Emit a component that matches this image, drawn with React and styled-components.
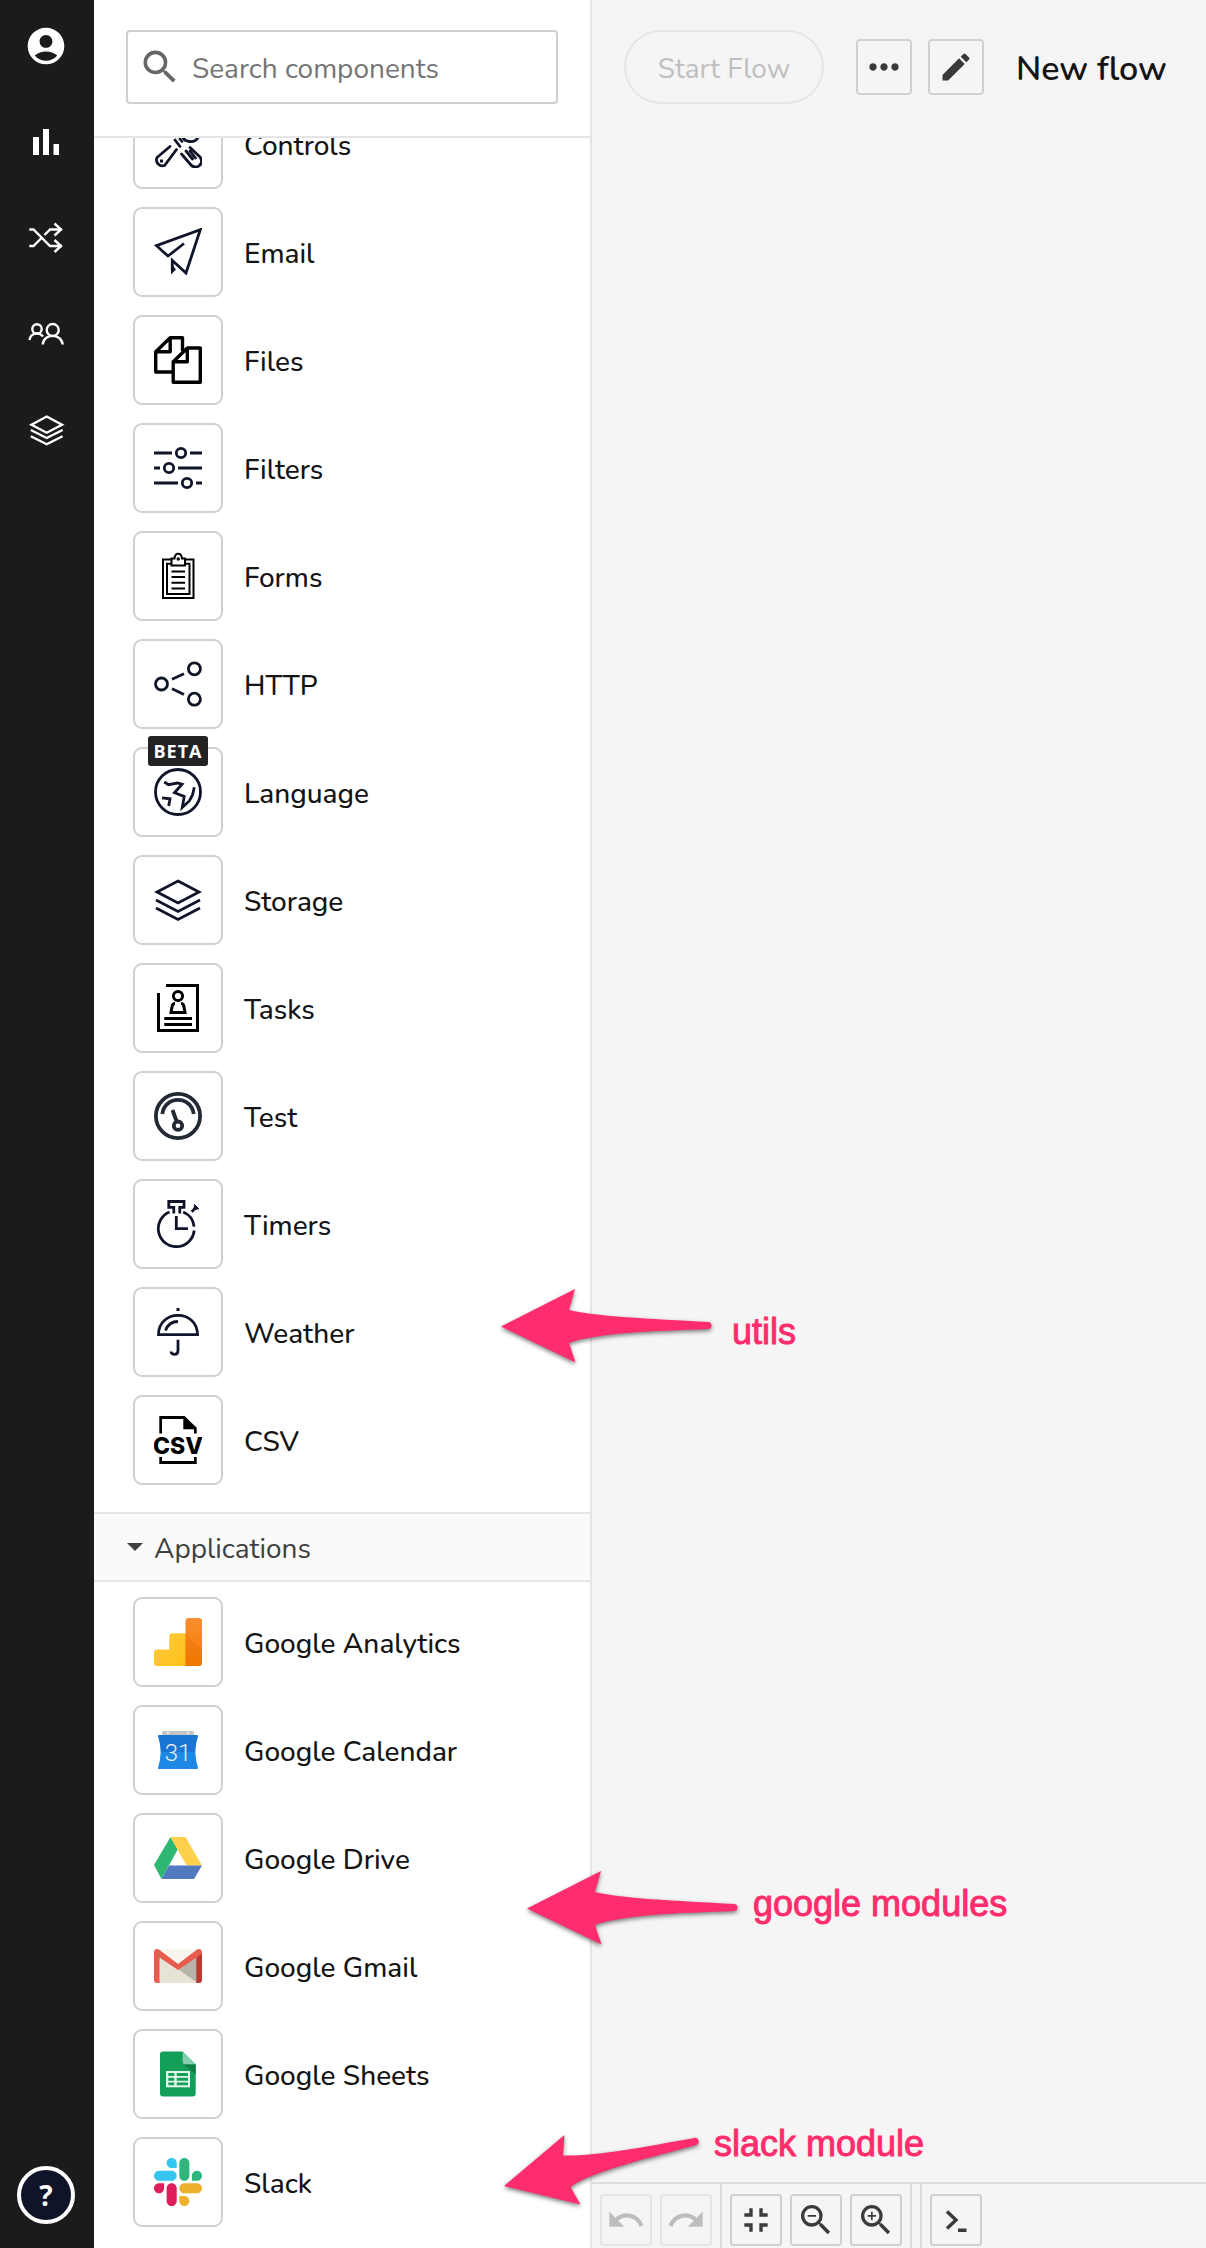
import React, { useState } from 'react';
import styled, { createGlobalStyle, ThemeProvider } from 'styled-components';
import {
  MdAccountCircle,
  MdEdit,
  MdFullscreenExit,
  MdMoreHoriz,
  MdRedo,
  MdSearch,
  MdUndo,
  MdZoomIn,
  MdZoomOut,
} from 'react-icons/md';

const theme = {
  colors: {
    sidebar: '#1b1b1b',
    canvas: '#f5f5f5',
    panel: '#ffffff',
    section: '#fafafa',
    line: '#e5e5e5',
    border: '#d0d0d0',
    text: '#141414',
    muted: '#757575',
    icon: '#3a3a3a',
    ink: '#0f1428',
    pink: '#ff2d6d',
  },
  fonts: {
    primary: '"Nunito", "Lato", "Open Sans", sans-serif',
    note: '"Liberation Sans", Arial, sans-serif',
  },
};

const GlobalStyle = createGlobalStyle`
  *, *::before, *::after {
    box-sizing: border-box;
  }
  body {
    margin: 0;
    font-family: ${theme.fonts.primary};
    color: ${theme.colors.text};
    background: ${theme.colors.canvas};
  }
  button, input {
    font-family: inherit;
  }
`;

const Layout = styled.div`
  position: relative;
  display: grid;
  grid-template-columns: 94px 498px 1fr;
  height: 100vh;
  overflow: hidden;
`;

const Sidebar = styled.nav`
  display: flex;
  flex-direction: column;
  justify-content: space-between;
  align-items: center;
  padding: 24px 2px 24px 0;
  background: ${props => props.theme.colors.sidebar};
`;

const NavList = styled.ul`
  display: flex;
  flex-direction: column;
  gap: 52px;
  margin: 0;
  padding: 0;
  list-style: none;
`;

const NavLink = styled.a`
  display: block;
  width: 44px;
  height: 44px;
  color: #fff;

  svg {
    display: block;
  }
`;

const HelpButton = styled.button`
  width: 58px;
  height: 58px;
  padding: 0;
  border: 4px solid #fff;
  border-radius: 50%;
  color: #fff;
  background: ${props => props.theme.colors.ink};
  font: 700 28px 'Open Sans', sans-serif;
`;

const Panel = styled.aside`
  display: flex;
  flex-direction: column;
  min-height: 0;
  background: ${props => props.theme.colors.panel};
  border-right: 2px solid ${props => props.theme.colors.line};
`;

const SearchBar = styled.div`
  flex: none;
  padding: 30px 32px 32px;
  border-bottom: 2px solid ${props => props.theme.colors.line};
`;

const SearchBox = styled.label`
  display: flex;
  align-items: center;
  gap: 10px;
  height: 74px;
  padding: 0 10px;
  color: #666;
  border: 2px solid ${props => props.theme.colors.border};
  border-radius: 4px;
`;

const SearchInput = styled.input`
  flex: 1;
  min-width: 0;
  padding: 4px 0 0;
  border: 0;
  outline: 0;
  background: none;
  font-size: 28px;
  color: ${props => props.theme.colors.text};

  &::placeholder {
    color: ${props => props.theme.colors.muted};
    opacity: 1;
  }
`;

const Scroller = styled.div`
  flex: 1;
  min-height: 0;
  overflow: hidden;
`;

const ComponentList = styled.ul`
  margin: ${props => (props.$scrolled ? '-54px 0 0' : 0)};
  padding: 6px 39px 18px;
  list-style: none;
`;

const ComponentRow = styled.li`
  display: flex;
  align-items: center;
  gap: 21px;
  padding: 9px 0;
`;

const ComponentName = styled.span`
  padding-top: 4px;
  font-size: 28px;
  font-weight: 500;
`;

const Tile = styled.span`
  position: relative;
  display: flex;
  align-items: center;
  justify-content: center;
  flex: none;
  width: 90px;
  height: 90px;
  border: 2px solid ${props => props.theme.colors.border};
  border-radius: 9px;
`;

const Badge = styled.span`
  position: absolute;
  top: -13px;
  left: 13px;
  width: 60px;
  border-radius: 3px;
  background: #222;
  color: #fff;
  font: 700 18px/30px 'Open Sans', sans-serif;
  letter-spacing: 1px;
  text-align: center;
`;

const SectionToggle = styled.button`
  display: flex;
  align-items: center;
  gap: 11px;
  width: 100%;
  height: 70px;
  padding: 0 33px;
  border: solid ${props => props.theme.colors.line};
  border-width: 2px 0;
  background: ${props => props.theme.colors.section};
  color: #3f3f3f;
  font-size: 28px;
`;

const SectionName = styled.span`
  padding-top: 4px;
`;

const Main = styled.main`
  display: flex;
  flex-direction: column;
  justify-content: space-between;
  min-width: 0;
`;

const FlowHeader = styled.header`
  display: flex;
  align-items: center;
  gap: 16px;
  padding: 30px 32px;
`;

const StartButton = styled.button`
  width: 200px;
  height: 74px;
  margin-right: 16px;
  padding: 4px 0 0;
  border: 2px solid ${props => props.theme.colors.line};
  border-radius: 37px;
  background: none;
  color: #bfbfbf;
  font-size: 28px;
`;

const IconButton = styled.button`
  display: flex;
  align-items: center;
  justify-content: center;
  flex: none;
  width: ${props => props.$size}px;
  height: ${props => props.$size}px;
  padding: 0;
  border: 2px solid ${props => props.theme.colors.border};
  border-radius: 4px;
  background: none;
  color: ${props => props.theme.colors.icon};

  &:disabled {
    border-color: ${props => props.theme.colors.line};
    color: #bdbdbd;
  }
  svg {
    flex: none;
  }
`;

const FlowTitle = styled.h1`
  margin: 0 0 0 16px;
  padding-top: 4px;
  font-size: 34px;
  font-weight: 600;
  line-height: 44px;
  white-space: nowrap;
`;

const Toolbar = styled.footer`
  display: flex;
  border-top: 2px solid #dcdcdc;
`;

const ToolGroup = styled.div`
  display: flex;
  gap: 8px;
  padding: ${props => (props.$empty ? '0 4px' : '10px 8px 2px')};
  border-right: ${props => (props.$last ? 0 : '2px solid #dcdcdc')};
`;

const Notes = styled.div`
  position: absolute;
  inset: 0;
  pointer-events: none;
`;

const Arrow = styled.svg`
  position: absolute;
  left: ${props => props.$x}px;
  top: ${props => props.$y}px;
  overflow: visible;
  fill: ${props => props.theme.colors.pink};
  filter: drop-shadow(0 2px 2px rgba(0, 0, 0, 0.5));
`;

const NoteText = styled.span`
  position: absolute;
  left: ${props => props.$x}px;
  top: ${props => props.$y}px;
  color: ${props => props.theme.colors.pink};
  font: 36px/40px ${props => props.theme.fonts.note};
  -webkit-text-stroke: 1px ${props => props.theme.colors.pink};
  white-space: nowrap;
`;

const NavGlyph = ({ children }) => (
  <svg width="44" height="44" viewBox="0 0 44 44" fill="none" stroke="currentColor" strokeWidth="2.4">
    {children}
  </svg>
);

const Glyph = ({ children, color = '#0f1428', width = 2.8, filled }) => (
  <svg
    width="48"
    height="48"
    viewBox="0 0 48 48"
    fill={filled ? color : 'none'}
    stroke={filled ? 'none' : color}
    strokeWidth={width}
  >
    {children}
  </svg>
);

const BarsIcon = () => (
  <NavGlyph>
    <path d="M9 17h6v18H9zM19 9h6v26h-6zM29.5 24H35v11h-5.5z" fill="currentColor" stroke="none" />
  </NavGlyph>
);

const ShuffleIcon = () => (
  <NavGlyph>
    <path d="M5.3 13.5H9.5L26 30H38M5.3 30H9.5L17 22.5M20.5 19L26 13.5H38" />
    <path d="M30.5 7.5L37 13.5L30.5 19.5M30.5 24L37 30L30.5 36" />
  </NavGlyph>
);

const PeopleIcon = () => (
  <NavGlyph>
    <circle cx="28.7" cy="18" r="6" />
    <circle cx="13" cy="17" r="4.7" />
    <path d="M18.7 32.5C19.5 21 37.5 21 38.7 32.5M5.5 28C6.5 20.5 15 19.5 19 24.5" />
  </NavGlyph>
);

const NavLayersIcon = () => (
  <NavGlyph>
    <path d="M22.7 8.5L38 16.7L22.7 24.7L7.5 16.7ZM6.8 22L22.7 30L38.6 22M6.8 28.2L22.7 36.2L38.6 28.2" />
  </NavGlyph>
);

const ControlsIcon = () => (
  <Glyph>
    <g strokeLinecap="round">
      <path d="M16 26.5L3 37.5A6 6 0 0 0 10.5 45.5L22.5 29.5M21 20L26 26.500M26 19L28 21.500" />
      <path d="M27.500 34L37 45A6 6 0 0 0 46 37L36 27.500M32 31L38.500 39M36 31L41.500 38" />
      <path d="M28 14C29 23.500 41 23.500 44.500 17" />
    </g>
    <path d="M6 39.500h3v3H6z" fill="#0f1428" stroke="none" />
  </Glyph>
);

const EmailIcon = () => (
  <Glyph>
    <path d="M30 15.5L14 28L2.5 17.7L46.3 1.7L32 45L18.3 32.5V43" />
    <path d="M17 38V46.5L22 41.5L19 38Z" fill="#0f1428" stroke="none" />
  </Glyph>
);

const FilesIcon = () => (
  <Glyph color="#000" width={3.4}>
    <g strokeLinejoin="round">
      <path d="M28.5 15V1.7H16.2V15.7H1.7V36H18.5M1.7 15.7L16.2 1.7" />
      <path d="M33.3 12H46.3V46.3H19.2V25.7L33.3 12V25.7H19.2" />
    </g>
  </Glyph>
);

const FiltersIcon = () => (
  <Glyph>
    <path d="M0 9H18M36 9H48M0 24H6M24 24H48M0 39H24M42 39H48" />
    <circle cx="27" cy="9" r="4.7" />
    <circle cx="15" cy="24" r="4.7" />
    <circle cx="33" cy="39" r="4.7" />
  </Glyph>
);

const FormsIcon = () => (
  <Glyph color="#000" width={2}>
    <path d="M17 7.5H9V46H39.5V7.5H31.5M17 11.7H13V42H35.5V11.7H31.5" />
    <path d="M17.5 13.5V6.5H20.5C21 0 27.5 0 28 6.5H31V13.5ZM17.5 19.5H31M17.5 25H31M17.5 30.7H31M17.5 36.5H31" />
    <circle cx="24.2" cy="7" r="0.7" />
  </Glyph>
);

const HttpIcon = () => (
  <Glyph>
    <circle cx="7.5" cy="24" r="6" />
    <circle cx="40.4" cy="8.8" r="6" />
    <circle cx="40.4" cy="39.2" r="6" />
    <path d="M18 19.3L30 13.7M18 28.7L30 34.5" />
  </Glyph>
);

const LanguageIcon = () => (
  <Glyph>
    <circle cx="24" cy="24" r="22.5" />
    <path d="M10.3 14L14.5 16.7L23.5 15L28 16.3L20.5 24.7L30.2 28.5L28.3 39.5L35.3 33L38.5 27L40.3 19.3M8 29.8L16 30.8L14.7 38" />
  </Glyph>
);

const StorageIcon = () => (
  <Glyph>
    <path d="M24 5L45 16L24 27L3 16ZM2 24L24 35.5L46 24M2 32L24 43.5L46 32" />
  </Glyph>
);

const TasksIcon = () => (
  <Glyph color="#000" width={3}>
    <path d="M12 1.5H43.5V46.5H4.5V9M10.3 34.5H38M10.3 40.5H38" />
    <circle cx="24" cy="12" r="4.6" />
    <path d="M21 19.5C19 19.5 18.5 20.5 18.2 22L17 28.5H31L29.8 22C29.5 20.5 29 19.5 27 19.5" />
  </Glyph>
);

const TestIcon = () => (
  <Glyph color="#232a36" width={3.8}>
    <circle cx="24" cy="24" r="22.1" />
    <path d="M8.3 22C10.5 3.2 37.5 3.2 39.7 22M18.5 18L22.5 29" />
    <circle cx="24" cy="33.7" r="4.2" />
  </Glyph>
);

const TimersIcon = () => (
  <Glyph>
    <path d="M15.5 12A18 18 0 1 0 40.2 30.5M29.2 12A18 18 0 0 1 40.1 26.7M22.3 16V28.7H34" />
    <path d="M19.8 13.5V7.3H14.8V1.5H30V7.3H25.8V13.5M37.7 11.7L42 7.5" />
    <path d="M40.5 4.5L44.8 8.8L40 9.5Z" fill="#0f1428" strokeWidth="1" />
  </Glyph>
);

const WeatherIcon = () => (
  <Glyph>
    <path d="M4.5 26.6C4.5 1 43.5 1 43.5 26.6ZM11.5 22.5C13.5 17 18 13.5 24 13.5M24 31.7V42.5C24 48 17 47 17 43.5" />
    <path d="M22.5 0h3v3h-3z" fill="#0f1428" stroke="none" />
  </Glyph>
);

const CsvIcon = () => (
  <Glyph color="#000" filled>
    <path d="M5.3 0H30.5L42.7 11.8V17.5H40V13.3H29.3V3H8V17.5H5.3ZM5.3 41H8V45H40V41H42.7V48H5.3Z" />
    <text x="24" y="37.5" textAnchor="middle" fontFamily="Inter, sans-serif" fontWeight="800" fontSize="23">
      CSV
    </text>
  </Glyph>
);

const AnalyticsIcon = () => (
  <Glyph filled>
    <defs>
      <linearGradient id="bar" x1="0" y1="0" x2="0" y2="1">
        <stop offset="0" stopColor="#f98d2f" />
        <stop offset="1" stopColor="#f57c00" />
      </linearGradient>
      <linearGradient id="steps" x1="0" y1="0" x2="1" y2="1">
        <stop offset="0" stopColor="#ffcb3d" />
        <stop offset="1" stopColor="#ffc019" />
      </linearGradient>
    </defs>
    <path d="M32 15.3H18.5A3.2 3.2 0 0 0 15.3 18.5V31.5H3.2A3.2 3.2 0 0 0 0 34.7V44.8A3.2 3.2 0 0 0 3.2 48H32Z" fill="url(#steps)" />
    <path d="M31.5 3.2A3.2 3.2 0 0 1 34.7 0H44.8A3.2 3.2 0 0 1 48 3.2V44.8A3.2 3.2 0 0 1 44.8 48H31.5Z" fill="url(#bar)" />
    <path d="M31.5 16L48 31.5V44.8A3.2 3.2 0 0 1 44.8 48H31.5Z" fill="#e8710a" opacity="0.35" />
  </Glyph>
);

const CalendarIcon = () => (
  <Glyph filled>
    <path d="M8 9V6.5A1.5 1.5 0 0 1 9.5 5H38.5A1.5 1.5 0 0 1 40 6.5V9Z" fill="#c4c4c4" />
    <circle cx="14" cy="7" r="1" fill="#fff" />
    <circle cx="34" cy="7" r="1" fill="#fff" />
    <path d="M5 9H43A1 1 0 0 1 44 10Q41.5 18 41.3 26H6.7Q6.5 18 4 10A1 1 0 0 1 5 9Z" fill="#1976d2" />
    <path d="M6.7 26H41.3Q41.5 34 44 42A1 1 0 0 1 43 43H5A1 1 0 0 1 4 42Q6.5 34 6.7 26Z" fill="#1e88e5" />
    <text x="24" y="34.7" textAnchor="middle" fill="#eee" fontFamily="Roboto, sans-serif" fontWeight="300" fontSize="24">
      31
    </text>
  </Glyph>
);

const DriveIcon = () => (
  <Glyph filled>
    <path d="M16.5 3L23.7 15.5L7.5 45L0 31Z" fill="#2eb673" />
    <path d="M16.5 3H31.5L48 31.5H32.5Z" fill="#ffd04b" />
    <path d="M15 31.5H48L40 45H7.5Z" fill="#5079bf" />
  </Glyph>
);

const GmailIcon = () => (
  <Glyph filled>
    <path d="M3 7H45V41H3Z" fill="#e8e3d7" />
    <path d="M3 7H45L24 23Z" fill="#f8f6ef" />
    <path d="M24 27L43 13V41Z" fill="#b7b5aa" />
    <path d="M24 27L43 41H5.5Z" fill="#e8e3d7" />
    <path d="M5.5 15V41H3A3 3 0 0 1 0 38V10Z" fill="#ea5b4f" />
    <path d="M42.3 15V41H45A3 3 0 0 0 48 38V10Z" fill="#b93b31" />
    <path d="M0 10C0 7 3 6.2 5 7.5L24 22L43 7.5C45 6.2 48 7 48 10C48 12 47 12.5 45.5 13.5L24 28L5.5 15.5V17L0 13Z" fill="#ea5b4f" />
  </Glyph>
);

const SheetsIcon = () => (
  <Glyph filled>
    <path d="M9 1.5H28.7L41.7 14.5V43.5A3 3 0 0 1 38.7 46.5H9A3 3 0 0 1 6 43.5V4.5A3 3 0 0 1 9 1.5Z" fill="#149f58" />
    <path d="M28.7 1.5L41.7 14.5H31.7A3 3 0 0 1 28.7 11.5Z" fill="#87ceac" />
    <path d="M29.7 14.5H41.7V24Z" fill="#0d7f45" />
    <path d="M12 21H36V37.3H12Z" fill="#e6f5ec" />
    <path d="M14.3 23H20.3V26H14.3ZM22.7 23H34V26H22.7ZM14.3 27.8H20.3V30.7H14.3ZM22.7 27.8H34V30.7H22.7ZM14.3 32.4H20.3V35.3H14.3ZM22.7 32.4H34V35.3H22.7Z" fill="#149f58" />
  </Glyph>
);

const SlackIcon = () => (
  <svg width="48" height="48" viewBox="0 0 122.8 122.8">
    <path fill="#e01e5a" d="M25.8 77.6c0 7.1-5.8 12.9-12.9 12.9S0 84.7 0 77.6s5.8-12.9 12.9-12.9h12.9v12.9zm6.5 0c0-7.1 5.8-12.9 12.9-12.9s12.9 5.8 12.9 12.9v32.3c0 7.1-5.8 12.9-12.9 12.9s-12.9-5.8-12.9-12.9V77.6z" />
    <path fill="#36c5f0" d="M45.2 25.8c-7.1 0-12.9-5.8-12.9-12.9S38.1 0 45.2 0s12.9 5.8 12.9 12.9v12.9H45.2zm0 6.5c7.1 0 12.9 5.8 12.9 12.9s-5.8 12.9-12.9 12.9H12.9C5.8 58.1 0 52.3 0 45.2s5.8-12.9 12.9-12.9h32.3z" />
    <path fill="#2eb67d" d="M97 45.2c0-7.1 5.8-12.9 12.9-12.9s12.9 5.8 12.9 12.9-5.8 12.9-12.9 12.9H97V45.2zm-6.5 0c0 7.1-5.8 12.9-12.9 12.9s-12.9-5.8-12.9-12.9V12.9C64.7 5.8 70.5 0 77.6 0s12.9 5.8 12.9 12.9v32.3z" />
    <path fill="#ecb22e" d="M77.6 97c7.1 0 12.9 5.8 12.9 12.9s-5.8 12.9-12.9 12.9-12.9-5.8-12.9-12.9V97h12.9zm0-6.5c-7.1 0-12.9-5.8-12.9-12.9s5.8-12.9 12.9-12.9h32.3c7.1 0 12.9 5.8 12.9 12.9s-5.8 12.9-12.9 12.9H77.6z" />
  </svg>
);

const ConsoleIcon = () => (
  <svg width="40" height="40" viewBox="0 0 40 40" fill="none" stroke="currentColor" strokeWidth="3.4">
    <path d="M11 11.5L20 20L11 28.5M22 30.2H30.5" />
  </svg>
);

const navItems = [
  { label: 'Account', icon: <MdAccountCircle size={44} /> },
  { label: 'Dashboard', icon: <BarsIcon /> },
  { label: 'Flows', icon: <ShuffleIcon /> },
  { label: 'Teams', icon: <PeopleIcon /> },
  { label: 'Storages', icon: <NavLayersIcon /> },
];

const utils = [
  { title: 'Controls', icon: <ControlsIcon /> },
  { title: 'Email', icon: <EmailIcon /> },
  { title: 'Files', icon: <FilesIcon /> },
  { title: 'Filters', icon: <FiltersIcon /> },
  { title: 'Forms', icon: <FormsIcon /> },
  { title: 'HTTP', icon: <HttpIcon /> },
  { title: 'Language', icon: <LanguageIcon />, beta: true },
  { title: 'Storage', icon: <StorageIcon /> },
  { title: 'Tasks', icon: <TasksIcon /> },
  { title: 'Test', icon: <TestIcon /> },
  { title: 'Timers', icon: <TimersIcon /> },
  { title: 'Weather', icon: <WeatherIcon /> },
  { title: 'CSV', icon: <CsvIcon /> },
];

const applications = [
  { title: 'Google Analytics', icon: <AnalyticsIcon /> },
  { title: 'Google Calendar', icon: <CalendarIcon /> },
  { title: 'Google Drive', icon: <DriveIcon /> },
  { title: 'Google Gmail', icon: <GmailIcon /> },
  { title: 'Google Sheets', icon: <SheetsIcon /> },
  { title: 'Slack', icon: <SlackIcon /> },
];

const straightArrow =
  'M0 37.5L74 0L68 21C90 27 150 30 207 33A3.5 3.5 0 0 1 207 40C150 42 95 44 68 54L74.5 73.5Z';
const tiltedArrow =
  'M0 51L60.5 0L59 20.5C95 21 140 12 190 3A3.5 3.5 0 0 1 192 10C150 22 90 35 66.5 52L76.5 69.5Z';

function Components({ items, scrolled }) {
  return (
    <ComponentList $scrolled={scrolled}>
      {items.map(({ title, icon, beta }) => (
        <ComponentRow key={title}>
          <Tile>
            {icon}
            {beta ? <Badge>BETA</Badge> : null}
          </Tile>
          <ComponentName>{title}</ComponentName>
        </ComponentRow>
      ))}
    </ComponentList>
  );
}

function App() {
  const [query, setQuery] = useState('');
  const [isOpen, setIsOpen] = useState(true);

  return (
    <ThemeProvider theme={theme}>
      <GlobalStyle />
      <Layout>
        <Sidebar>
          <NavList>
            {navItems.map(({ label, icon }) => (
              <li key={label}>
                <NavLink href="#" aria-label={label}>
                  {icon}
                </NavLink>
              </li>
            ))}
          </NavList>
          <HelpButton aria-label="Help">?</HelpButton>
        </Sidebar>

        <Panel>
          <SearchBar>
            <SearchBox>
              <MdSearch size={44} />
              <SearchInput
                aria-label="Search components"
                placeholder="Search components"
                value={query}
                onChange={e => setQuery(e.target.value)}
              />
            </SearchBox>
          </SearchBar>
          <Scroller>
            <Components items={utils} scrolled />
            <SectionToggle aria-expanded={isOpen} onClick={() => setIsOpen(!isOpen)}>
              <svg width="16" height="8" viewBox="0 0 16 8" fill="currentColor">
                <path d="M0 0H16L8 8Z" />
              </svg>
              <SectionName>Applications</SectionName>
            </SectionToggle>
            {isOpen ? <Components items={applications} /> : null}
          </Scroller>
        </Panel>

        <Main>
          <FlowHeader>
            <StartButton disabled>Start Flow</StartButton>
            <IconButton $size={56} aria-label="More">
              <MdMoreHoriz size={44} />
            </IconButton>
            <IconButton $size={56} aria-label="Rename">
              <MdEdit size={36} />
            </IconButton>
            <FlowTitle>New flow</FlowTitle>
          </FlowHeader>
          <Toolbar>
            <ToolGroup>
              <IconButton $size={52} aria-label="Undo" disabled>
                <MdUndo size={40} />
              </IconButton>
              <IconButton $size={52} aria-label="Redo" disabled>
                <MdRedo size={40} />
              </IconButton>
            </ToolGroup>
            <ToolGroup>
              <IconButton $size={52} aria-label="Fit to screen">
                <MdFullscreenExit size={40} />
              </IconButton>
              <IconButton $size={52} aria-label="Zoom out">
                <MdZoomOut size={40} />
              </IconButton>
              <IconButton $size={52} aria-label="Zoom in">
                <MdZoomIn size={40} />
              </IconButton>
            </ToolGroup>
            <ToolGroup $empty />
            <ToolGroup $last>
              <IconButton $size={52} aria-label="Console">
                <ConsoleIcon />
              </IconButton>
            </ToolGroup>
          </Toolbar>
        </Main>

        <Notes>
          <Arrow $x={501} $y={1289} width="212" height="74">
            <path d={straightArrow} />
          </Arrow>
          <NoteText $x={732} $y={1312}>utils</NoteText>
          <Arrow $x={527} $y={1871} width="212" height="74">
            <path d={straightArrow} />
          </Arrow>
          <NoteText $x={753} $y={1884}>google modules</NoteText>
          <Arrow $x={504} $y={2135} width="196" height="70">
            <path d={tiltedArrow} />
          </Arrow>
          <NoteText $x={714} $y={2124}>slack module</NoteText>
        </Notes>
      </Layout>
    </ThemeProvider>
  );
}

export default App;
